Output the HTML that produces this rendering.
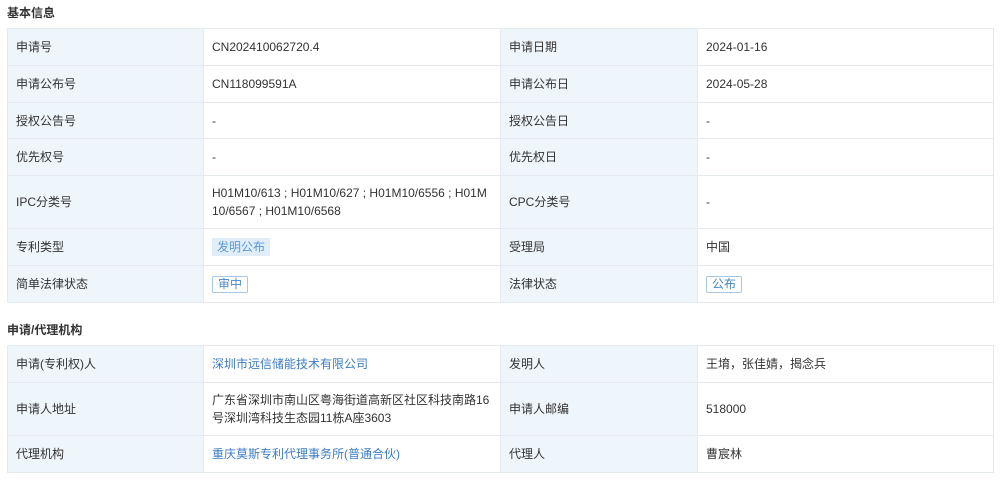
<!DOCTYPE html>
<html><head><meta charset="utf-8"><style>
body{margin:0;width:1000px;height:481px;background:#fff;font-family:"Liberation Sans","Noto Sans CJK SC",sans-serif;font-size:12px;color:#333;overflow:hidden;position:relative}
h3{position:absolute;left:7px;margin:0;font-size:12px;font-weight:bold;color:#333}
table{position:absolute;left:7px;width:986px;border-collapse:collapse;table-layout:fixed}
td{border:1px solid #e4eaf0;padding:0 8px;line-height:18px;word-break:break-all}
td.l{background:#eef5fb}
a{color:#3d7cc6;text-decoration:none}
.t1{display:inline-block;background:#e1eefa;color:#5a98d6;padding:1px 5px;line-height:16px}
.t2{display:inline-block;border:1px solid #a8c7e4;color:#4a88c8;padding:0 5px;line-height:15px;border-radius:2px}
</style></head><body>
<h3 style="top:4px">基本信息</h3>
<table style="top:28px">
<colgroup><col style="width:196px"><col style="width:297px"><col style="width:197px"><col style="width:296px"></colgroup>
<tr style="height:37px"><td class="l">申请号</td><td>CN202410062720.4</td><td class="l">申请日期</td><td>2024-01-16</td></tr>
<tr style="height:37px"><td class="l">申请公布号</td><td>CN118099591A</td><td class="l">申请公布日</td><td>2024-05-28</td></tr>
<tr style="height:36px"><td class="l">授权公告号</td><td>-</td><td class="l">授权公告日</td><td>-</td></tr>
<tr style="height:37px"><td class="l">优先权号</td><td>-</td><td class="l">优先权日</td><td>-</td></tr>
<tr style="height:53px"><td class="l">IPC分类号</td><td>H01M10/613 ; H01M10/627 ; H01M10/6556 ; H01M10/6567 ; H01M10/6568</td><td class="l">CPC分类号</td><td>-</td></tr>
<tr style="height:37px"><td class="l">专利类型</td><td><span class="t1">发明公布</span></td><td class="l">受理局</td><td>中国</td></tr>
<tr style="height:37px"><td class="l">简单法律状态</td><td><span class="t2">审中</span></td><td class="l">法律状态</td><td><span class="t2">公布</span></td></tr>
</table>
<h3 style="top:321px">申请/代理机构</h3>
<table style="top:345px">
<colgroup><col style="width:196px"><col style="width:297px"><col style="width:197px"><col style="width:296px"></colgroup>
<tr style="height:37px"><td class="l">申请(专利权)人</td><td><a>深圳市远信储能技术有限公司</a></td><td class="l">发明人</td><td>王堉，张佳婧，揭念兵</td></tr>
<tr style="height:53px"><td class="l">申请人地址</td><td>广东省深圳市南山区粤海街道高新区社区科技南路16号深圳湾科技生态园11栋A座3603</td><td class="l">申请人邮编</td><td>518000</td></tr>
<tr style="height:37px"><td class="l">代理机构</td><td><a>重庆莫斯专利代理事务所(普通合伙)</a></td><td class="l">代理人</td><td>曹宸林</td></tr>
</table>
</body></html>
